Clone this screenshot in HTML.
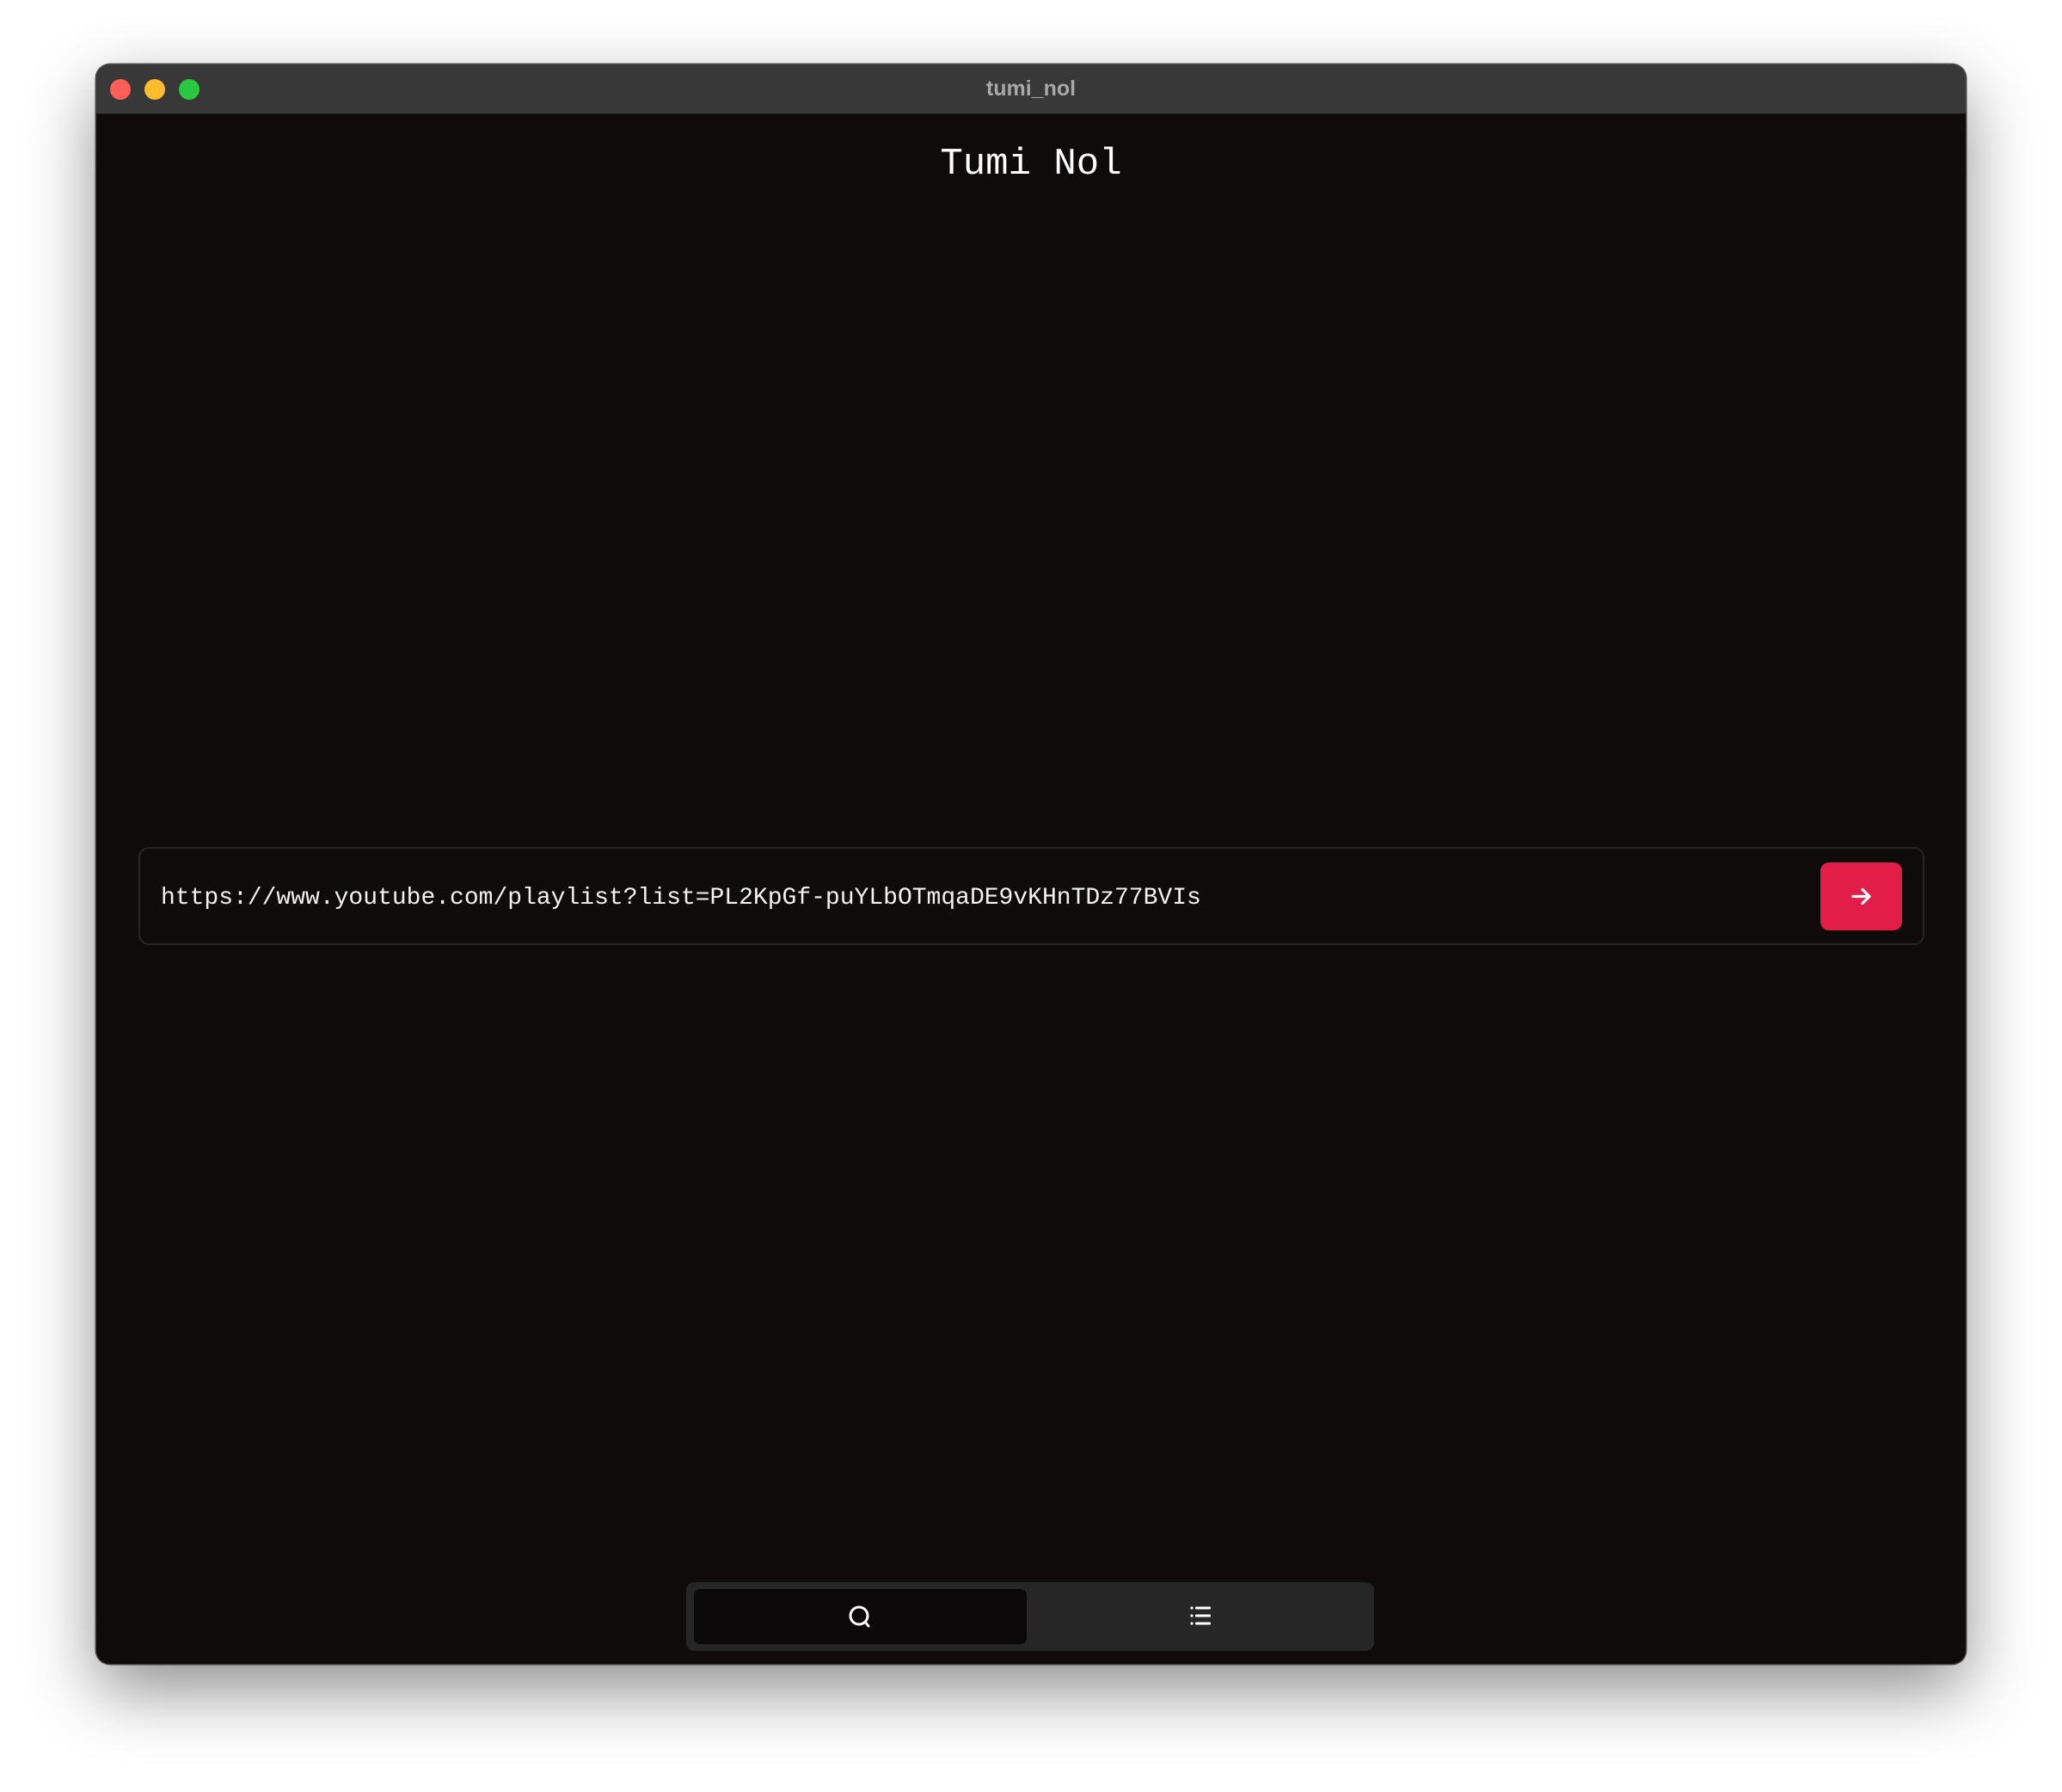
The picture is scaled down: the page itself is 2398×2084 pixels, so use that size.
<!DOCTYPE html>
<html><head><style>
html,body{margin:0;padding:0;width:2398px;height:2084px;background:#fff;overflow:hidden}
.win{position:absolute;left:112px;top:75px;width:2174px;height:1860px;background:#0e0b0a;border-radius:16px;box-shadow:0 30px 80px rgba(0,0,0,.45),0 0 0 1.5px #5a5a5a;overflow:hidden}
.tb{position:absolute;left:0;top:0;right:0;height:57px;background:#383838;border-bottom:1px solid #111}
.dot{position:absolute;top:17px;width:24px;height:24px;border-radius:50%}
.tt{position:absolute;left:0;right:0;top:14px;text-align:center;color:#a8a8a8;font:bold 25px "Liberation Sans",sans-serif}
.title{position:absolute;left:0;right:0;top:91px;text-align:center;color:#fff;font:44px "Liberation Mono","DejaVu Sans Mono",monospace}
.inp{position:absolute;left:49px;top:910px;width:2077px;height:114px;border:2px solid #262626;border-radius:12px;box-sizing:border-box}
.txt{position:absolute;left:24px;top:42px;color:#f2f2f2;font:28px "Liberation Mono","DejaVu Sans Mono",monospace;letter-spacing:0px}
.btn{position:absolute;left:2005px;top:928px;width:95px;height:79px;background:#e11d48;border-radius:10px}
.bar{position:absolute;left:686px;top:1765px;width:800px;height:80px;background:#262626;border-radius:10px}
.tab{position:absolute;left:9px;top:8px;width:387px;height:64px;background:#0a0808;border-radius:7px}
</style></head><body>
<div class="win">
<div class="tb">
<div class="dot" style="left:16px;background:#fe5f57"></div>
<div class="dot" style="left:56px;background:#febc2e"></div>
<div class="dot" style="left:96px;background:#28c840"></div>
<div class="tt">tumi_nol</div>
</div>
<div class="title">Tumi Nol</div>
<div class="inp"><div class="txt">https://www.youtube.com/playlist?list=PL2KpGf-puYLbOTmqaDE9vKHnTDz77BVIs</div></div>
<div class="btn"><svg width="95" height="79" viewBox="0 0 95 79"><path d="M38 39.5H57M49 31.5L57 39.5L49 47.5" stroke="#fff" stroke-width="3.2" fill="none" stroke-linecap="round" stroke-linejoin="round"/></svg></div>
<div class="bar">
<div class="tab"><svg width="387" height="64" viewBox="0 0 387 64"><circle cx="192" cy="31" r="10" stroke="#fff" stroke-width="3" fill="none"/><path d="M199 38L203 43" stroke="#fff" stroke-width="3" stroke-linecap="round"/></svg></div>
<svg style="position:absolute;left:582px;top:25px" width="40" height="30" viewBox="0 0 40 30"><g fill="#fff"><circle cx="6" cy="5" r="1.6"/><circle cx="6" cy="14" r="1.6"/><circle cx="6" cy="23" r="1.6"/><rect x="10" y="3.5" width="18" height="3" rx="1"/><rect x="10" y="12.5" width="18" height="3" rx="1"/><rect x="10" y="21.5" width="18" height="3" rx="1"/></g></svg>
</div>
</div>
</body></html>
